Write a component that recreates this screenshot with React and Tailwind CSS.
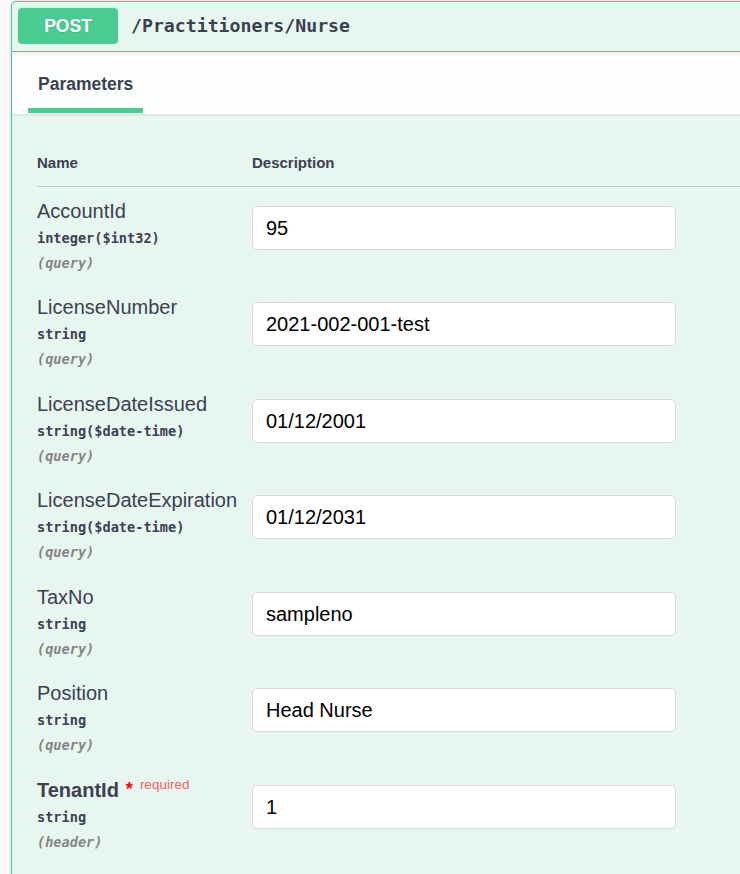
import React from "react";

const rows = [
  { name: "AccountId", type: "integer($int32)", loc: "(query)", value: "95" },
  { name: "LicenseNumber", type: "string", loc: "(query)", value: "2021-002-001-test" },
  { name: "LicenseDateIssued", type: "string($date-time)", loc: "(query)", value: "01/12/2001" },
  { name: "LicenseDateExpiration", type: "string($date-time)", loc: "(query)", value: "01/12/2031" },
  { name: "TaxNo", type: "string", loc: "(query)", value: "sampleno" },
  { name: "Position", type: "string", loc: "(query)", value: "Head Nurse" },
  { name: "TenantId", type: "string", loc: "(header)", value: "1", required: true },
];

const sans = "font-['Liberation_Sans',Arial,sans-serif]";
const mono = "font-['DejaVu_Sans_Mono','Liberation_Mono',monospace]";

function Row({ r }) {
  return (
    <div className="flex h-[96.5px] pt-[12.5px]">
      <div className="w-[215px] shrink-0">
        <div className={`${sans} text-[20px] leading-[23px] text-[#3b4151] flex items-start whitespace-nowrap ${r.required ? "font-bold" : ""}`}>
          <span>{r.name}</span>
          {r.required && (
            <>
              <span className="text-[#ff0000] text-[18px] leading-[17px] ml-[7px] mt-[2px] font-bold">*</span>
              <span className="text-[#f5625f] text-[13.5px] leading-[15px] ml-[7px] mt-[-1.5px] font-normal">required</span>
            </>
          )}
        </div>
        <div className={`${mono} font-bold text-[13.6px] leading-[25px] pt-[3px] text-[#3b4151]`}>{r.type}</div>
        <div className={`${mono} font-bold italic text-[13.6px] leading-[25px] text-[#858585]`}>{r.loc}</div>
      </div>
      <div>
        <div className={`${sans} mt-[6.25px] h-[44px] w-[424px] bg-white border border-[#d9d9d9] rounded-[5px] flex items-center px-[13px] text-[20px] text-black`}>
          {r.value}
        </div>
      </div>
    </div>
  );
}

export default function App() {
  return (
    <div className="w-[740px] h-[874px] overflow-hidden bg-[#fafafa] pt-[1px] pl-[11px]">
      <div className="w-[780px] h-[900px] border border-[#49cc90] rounded-[5px] bg-[#e8f6f0] shadow-[0_0_3px_rgba(0,0,0,0.19)]">
        <div className="flex items-center pl-[6px] pt-[6px] pb-[7px] border-b border-[#49cc90]">
          <div className={`${sans} w-[100px] h-[36px] rounded-[4px] bg-[#49cc90] text-white font-bold text-[17.5px] flex items-center justify-center [text-shadow:0_1px_0_rgba(0,0,0,0.1)]`}>
            POST
          </div>
          <div className={`${mono} font-bold text-[18.2px] text-[#3b4151] ml-[13px]`}>/Practitioners/Nurse</div>
        </div>
        <div className="h-[62px] bg-[#fbfefd] shadow-[0_1px_2px_rgba(0,0,0,0.1)] pl-[16px] pt-[19.6px]">
          <div className="inline-flex flex-col">
            <div className={`${sans} px-[10px] font-bold text-[17.5px] leading-[20px] text-[#3b4151]`}>Parameters</div>
            <div className="mt-[14.4px] h-[4.7px] bg-[#49cc90]"></div>
          </div>
        </div>
        <div className="pl-[25px] pt-[25px]">
          <div className={`${sans} flex border-b border-[#c1cbc7] pt-[15px] pb-[15px] text-[15px] leading-[17px] font-bold text-[#3b4151]`}>
            <div className="w-[215px]">Name</div>
            <div>Description</div>
          </div>
          {rows.map((r) => (
            <Row key={r.name} r={r} />
          ))}
        </div>
      </div>
    </div>
  );
}
